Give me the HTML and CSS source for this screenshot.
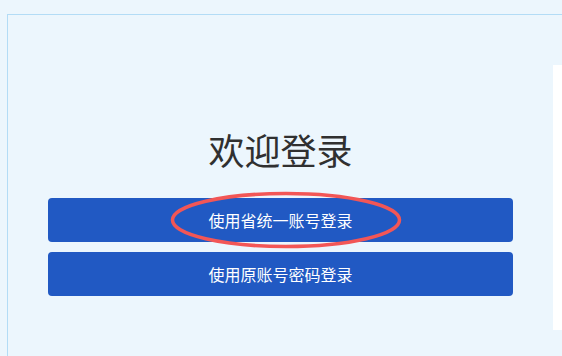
FILE: index.html
```html
<!DOCTYPE html>
<html lang="zh-CN">
<head>
<meta charset="utf-8">
<title>欢迎登录</title>
<link rel="stylesheet" href="styles.css">
</head>
<body>
<div class="frame">
  <div class="login-col">
    <h1 class="title">欢迎登录</h1>
    <button class="btn btn-main" type="button">使用省统一账号登录
      <svg class="mark" width="232" height="58" viewBox="0 0 232 58" aria-hidden="true">
        <ellipse cx="116" cy="29" rx="113.5" ry="26.5" fill="none" stroke="#f25656" stroke-width="3.5"/>
      </svg>
    </button>
    <button class="btn" type="button">使用原账号密码登录</button>
  </div>
  <div class="side-panel"></div>
</div>
</body>
</html>
```

FILE: styles.css
```css
html, body {
  margin: 0;
  padding: 0;
}
body {
  background: #ecf6fd;
  width: 562px;
  height: 356px;
  overflow: hidden;
  font-family: "Noto Sans CJK SC", "Noto Sans", sans-serif;
}
.frame {
  margin: 14px 0 0 7px;
  width: 554px;
  height: 341px;
  border-top: 1px solid #b3dcf6;
  border-left: 1px solid #b3dcf6;
  display: flex;
  align-items: flex-start;
  overflow: hidden;
}
.login-col {
  width: 465px;
  flex: none;
  padding: 109px 40px 0 40px;
  display: flex;
  flex-direction: column;
}
.title {
  margin: 0 0 24px 0;
  font-size: 36px;
  line-height: 50px;
  font-weight: 400;
  color: #303030;
  text-align: center;
}
.btn {
  position: relative;
  display: block;
  width: 100%;
  height: 44px;
  margin: 0 0 10px 0;
  padding: 0;
  border: none;
  border-radius: 4px;
  background: #2159c3;
  color: #ffffff;
  font-family: "Noto Sans CJK SC", "Noto Sans", sans-serif;
  font-size: 16px;
  line-height: 44px;
  text-align: center;
}
.mark {
  position: absolute;
  left: 122px;
  top: -7px;
  pointer-events: none;
}
.side-panel {
  margin-top: 50px;
  width: 9px;
  height: 265px;
  background: #ffffff;
  flex: none;
}
```
